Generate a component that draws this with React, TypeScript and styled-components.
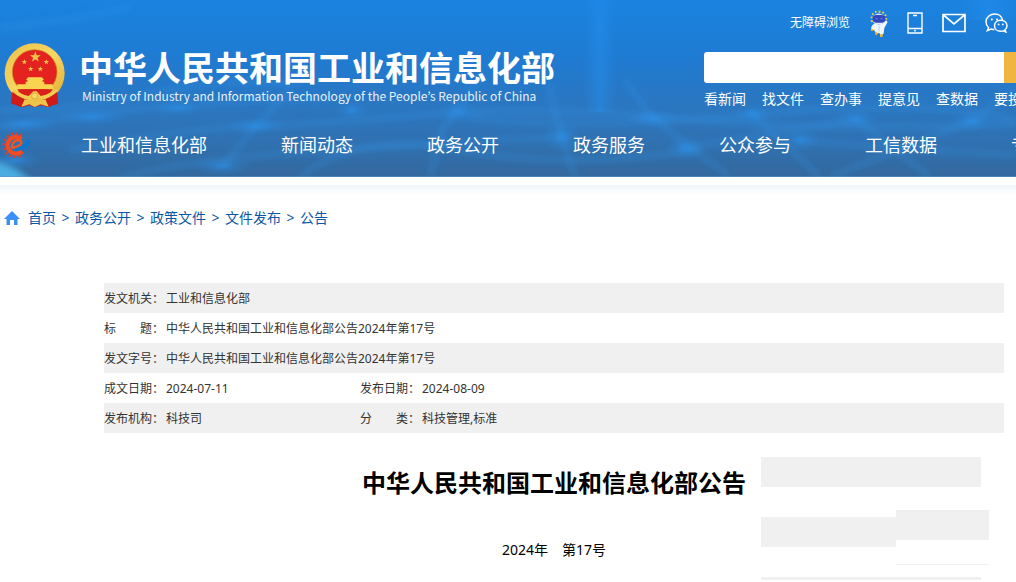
import React from "react";
import styled, { createGlobalStyle } from "styled-components";

const GlobalStyle = createGlobalStyle`
  * { box-sizing: border-box; }
  body {
    margin: 0;
    background: #fff;
    color: #333;
    font-family: "Noto Sans", "Noto Sans CJK SC", sans-serif;
    font-size: 14px;
    line-height: 20px;
  }
  a { color: inherit; text-decoration: none; }
`;

const Page = styled.div`
  min-width: 0;
  overflow: hidden;
`;

const Header = styled.header`
  position: relative;
  overflow: hidden;
  padding-bottom: 5px;
  color: #fff;
  background: linear-gradient(#1a83e0 0%, #1f7bd2 32%, #2c76bf 62%, #3070af 82%, #33689d 100%);
`;

const Backdrop = styled.svg`
  position: absolute;
  inset: 0;
  width: 100%;
  height: 100%;
`;

const Masthead = styled.div`
  position: relative;
  display: flex;
  justify-content: space-between;
  height: 118px;
`;

const Brand = styled.a`
  display: flex;
  align-items: flex-start;
  gap: 13px;
  padding: 42px 0 0 4px;
  white-space: nowrap;
`;

const BrandText = styled.div`
  display: flex;
  flex-direction: column;
  padding-top: 6px;
`;

const BrandName = styled.span`
  font-family: "Noto Sans CJK SC", sans-serif;
  font-size: 34px;
  font-weight: 700;
  line-height: 38px;
`;

const BrandEnglish = styled.span`
  padding-left: 3px;
  color: #e6f1fb;
  font-family: "Noto Sans CJK KR", sans-serif;
  font-size: 12px;
  line-height: 20px;
`;

const Tools = styled.div`
  flex: 0 0 312px;
  display: flex;
  flex-direction: column;
  overflow: hidden;
  white-space: nowrap;
`;

const Utilities = styled.div`
  display: flex;
  align-items: center;
  height: 52px;
  padding: 0 8px 6px 86px;
  font-size: 12px;
`;

const IconLinks = styled.div`
  display: flex;
  flex: 1;
  align-items: center;
  justify-content: space-between;
  padding-left: 20px;
  a { display: flex; }
`;

const Search = styled.form`
  display: flex;
  flex: 0 0 31px;
`;

const SearchInput = styled.input`
  flex: 0 0 300px;
  padding: 0 10px;
  border: 0;
  border-radius: 3px 0 0 3px;
  background: #fff;
  font: inherit;
`;

const SearchButton = styled.button`
  flex: 0 0 60px;
  border: 0;
  background: #f0b541;
`;

const QuickLinks = styled.nav`
  display: flex;
  gap: 16px;
  padding-top: 6px;
`;

const MainNav = styled.nav`
  position: relative;
  display: flex;
  align-items: center;
  gap: 74px;
  height: 54px;
  font-size: 18px;
  line-height: 26px;
  white-space: nowrap;
`;

const NavLead = styled.div`
  display: flex;
  flex: none;
  align-items: center;
  gap: 50px;
  padding-left: 1px;
`;

const HeaderShade = styled.div`
  height: 10px;
  margin-top: 8px;
  background: linear-gradient(#f0f5fa, #fff);
`;

const Breadcrumb = styled.nav`
  display: flex;
  align-items: center;
  padding: 13px 4px 55px;
  color: #0b57a4;
`;

const HomeIcon = styled.svg`
  margin-right: 8px;
`;

const Separator = styled.span`
  width: 19px;
  text-align: center;
`;

const Content = styled.main`
  padding: 0 12px 0 104px;
`;

const MetaTable = styled.table`
  width: 100%;
  border-collapse: collapse;
  table-layout: fixed;
  font-size: 12px;
  tr:nth-child(odd) { background: #f0f0f0; }
  th, td {
    height: 30px;
    padding: 2px 0 0;
    font-weight: 400;
    text-align: left;
    white-space: nowrap;
  }
`;

const LabelCol = styled.col`
  width: 62px;
`;

const ValueCol = styled.col`
  width: 194px;
`;

const Article = styled.article`
  position: relative;
  padding: 32px 0 20px;
  color: #000;
  text-align: center;
`;

const Title = styled.h1`
  margin: 0;
  font-size: 24px;
  font-weight: 700;
  line-height: 36px;
`;

const Issue = styled.p`
  margin: 39px 0 0;
`;

const Floating = styled.aside`
  position: absolute;
  top: 24px;
  right: 15px;
  width: 228px;
`;

const Stripes = styled.div`
  display: flex;
  flex-direction: column;
  gap: 30px;
  width: 220px;
`;

const Stripe = styled.div<{ $height: number }>`
  height: ${(p) => p.$height}px;
  background: #f0f0f0;
`;

const Overlay = styled.div`
  position: absolute;
  top: 53px;
  right: 0;
  width: 93px;
  padding-bottom: 24px;
  border-bottom: 1px solid #f0f0f0;
  background: #fff;
`;

const GLOWS = [
  [25, 124, 36, 9], [15, 160, 26, 10], [92, 117, 34, 9], [178, 108, 26, 8],
  [222, 166, 30, 10], [256, 126, 30, 9], [460, 112, 20, 12],
  [352, 110, 16, 10], [562, 137, 20, 16], [652, 118, 26, 9], [685, 148, 20, 14],
  [752, 114, 20, 10], [800, 140, 20, 12], [856, 119, 22, 10], [972, 121, 22, 10],
];

const STRANDS = [
  "M0 28 Q60 22 130 8", "M0 128 Q160 100 330 98", "M470 112 Q560 108 700 120 T1016 124",
  "M70 150 Q190 128 256 126 T460 112", "M0 110 Q70 112 150 94 T300 84",
  "M120 177 Q200 160 280 154 T470 142 562 137", "M222 166 256 126 290 90",
  "M430 177 L442 130 L485 72", "M575 177 L562 137 L548 84", "M470 118 Q600 130 760 114 T1016 120",
  "M625 80 L652 118 L730 177", "M685 148 Q760 135 856 119", "M752 114 L820 177",
  "M830 177 L972 121 L1016 88", "M856 119 L930 177", "M800 140 Q900 150 1016 155",
  "M300 177 Q360 130 460 150 T700 150",
];

function HeaderBackdrop() {
  return (
    <Backdrop viewBox="0 0 1016 177" preserveAspectRatio="none" aria-hidden="true">
      <defs>
        <filter id="soft" x="-50%" y="-50%" width="200%" height="200%">
          <feGaussianBlur stdDeviation="3" />
        </filter>
        <radialGradient id="glow">
          <stop offset="0" stopColor="#2b93ee" stopOpacity="0.6" />
          <stop offset="0.5" stopColor="#2b93ee" stopOpacity="0.2" />
          <stop offset="1" stopColor="#2b93ee" stopOpacity="0" />
        </radialGradient>
        <linearGradient id="beam">
          <stop offset="0" stopColor="#2590f0" stopOpacity="0" />
          <stop offset="0.5" stopColor="#2590f0" stopOpacity="0.45" />
          <stop offset="1" stopColor="#2590f0" stopOpacity="0" />
        </linearGradient>
      </defs>
      <rect x="584" width="32" height="112" fill="url(#beam)" />
      <rect x="962" width="54" height="20" fill="url(#beam)" />
      <g fill="none" stroke="#3398ee" strokeOpacity="0.36" strokeWidth="4" filter="url(#soft)">
        {STRANDS.map((d) => <path key={d} d={d} />)}
      </g>
      {GLOWS.map(([cx, cy, rx, ry]) => (
        <ellipse key={cx} cx={cx} cy={cy} rx={rx} ry={ry} fill="url(#glow)" />
      ))}
      <path d="M-8 160 Q18 166 34 184 H-8Z" fill="#50bdf2" opacity="0.8" filter="url(#soft)" />
      <rect y="176" width="1016" height="1" fill="#5c92c4" opacity="0.6" />
    </Backdrop>
  );
}

const STAR = "M0-10 2.4-3.2 9.5-3.1 3.8 1.2 5.9 8.1 0 4 -5.9 8.1 -3.8 1.2 -9.5-3.1 -2.4-3.2Z";

function Emblem() {
  return (
    <svg width="62" height="66" viewBox="12 16 186 198" aria-hidden="true">
      <defs>
        <linearGradient id="gold" x1="0" y1="0" x2="1" y2="1">
          <stop offset="0" stopColor="#eac04a" />
          <stop offset="0.5" stopColor="#f7d763" />
          <stop offset="1" stopColor="#e0a92c" />
        </linearGradient>
      </defs>
      <path d="M38 148 34 200 46 204 64 212 88 206 104 212 122 206 146 212 160 204 173 202 171 148Z" fill="#cb1d18" />
      <circle cx="104" cy="110" r="90" fill="url(#gold)" />
      <circle cx="104" cy="106" r="67" fill="#e42320" stroke="#c78a22" strokeWidth="2" />
      <g fill="#f0c549">
        <path d={STAR} transform="translate(106 61) scale(1.7)" />
        <path d={STAR} transform="translate(73 76) scale(.85)" />
        <path d={STAR} transform="translate(139 76) scale(.85)" />
        <path d={STAR} transform="translate(92 97) scale(.85)" />
        <path d={STAR} transform="translate(121 97) scale(.85)" />
      </g>
      <path d="M84 122H126L132 130H128V135H133V143H158V150L162 158H47L52 150V143H77V135H82V130H78Z" fill="#f8d451" />
      <path d="M52 158H158Q150 174 126 179Q104 184 82 179Q58 174 52 158Z" fill="#d9201c" />
      <path d="M40 156Q60 172 86 178L100 164H110L122 178Q150 172 170 156L172 166Q156 184 130 190L104 178 78 190Q50 184 37 166Z" fill="#f2cb4f" />
      <path d="M37 165Q60 184 84 190L70 210 46 204 34 200ZM172 165Q150 184 126 190L140 210 160 204 173 202Z" fill="#cf1c18" />
      <path d="M74 188 104 196 136 188 146 210 122 203 104 211 88 203 64 210Z" fill="#efc44a" />
      <circle cx="104" cy="178" r="9" fill="#f8da66" stroke="#d39a2a" strokeWidth="2" />
    </svg>
  );
}

function GearLogo() {
  return (
    <svg width="30" height="26" viewBox="3 285 90 78" aria-hidden="true">
      <g fill="none">
        <path d="M66 296A35 35 0 1 0 70 350" stroke="#d8412f" strokeWidth="7" strokeDasharray="7 7" />
        <path d="M64 306A25 25 0 1 0 66 342" stroke="#f04b22" strokeWidth="13" />
        <path d="M36 333Q34 316 50 310Q66 308 64 318Q60 329 36 333" stroke="#f0561f" strokeWidth="7" />
      </g>
      <path d="M44 334Q74 330 80 307L92 312Q86 340 50 342Z" fill="#0878ce" />
    </svg>
  );
}

function Robot() {
  return (
    <svg width="18" height="27" viewBox="0 0 54 81" aria-hidden="true">
      <g fill="none" stroke="#eed04d" strokeWidth="6" strokeDasharray="5 6">
        <path d="M6 36Q0 5 26 5Q52 5 48 36" />
      </g>
      <path d="M10 18Q26 3 43 18V38Q27 48 10 38Z" fill="#dfe9f8" />
      <rect x="8" y="15" width="38" height="23" rx="11" fill="#3346bd" />
      <path d="M16 26h7M31 26h7" stroke="#5a7cf0" strokeWidth="4" />
      <path d="M14 40Q27 47 41 39L48 31 53 36 43 54 41 70 34 78 28 69 18 70 12 60 4 60Q1 48 14 40Z" fill="#f2f5fa" />
      <path d="M3 57h6v6H3zM17 66l8 3-5 7-5-3zM30 73h9l-2 8h-7z" fill="#f1b72c" />
      <path d="M27 48v17" stroke="#bed0e5" strokeWidth="3" />
    </svg>
  );
}

function PhoneIcon() {
  return (
    <svg width="16" height="22" viewBox="0 0 16 22" fill="none" stroke="#fff" aria-hidden="true">
      <path d="M1 1H15V21H1Z" strokeWidth="1.4" />
      <path d="M1 16.5H15M6 3.5H10" strokeWidth="1.3" />
      <circle cx="8" cy="18.7" r=".9" fill="#fff" stroke="none" />
    </svg>
  );
}

function MailIcon() {
  return (
    <svg width="24" height="20" viewBox="0 0 24 20" fill="none" stroke="#fff" strokeWidth="1.7" aria-hidden="true">
      <path d="M1 1.5H23V18.5H1ZM1.5 2 12 11 22.5 2" />
    </svg>
  );
}

function WechatIcon() {
  return (
    <svg width="23" height="20" viewBox="0 0 23 20" fill="none" stroke="#fff" strokeWidth="1.5" aria-hidden="true">
      <path d="M17.5 7C16.5 3 13.4 1 9.8 1 5 1 1 4.4 1 8.8c0 2.4 1 4.5 2.6 5.9L2.4 17.6 6.2 16c1 .4 2 .6 3.2.6" />
      <path d="M15.7 7.2c3.6 0 6.3 2.4 6.3 5.5 0 1.8-.8 3.2-2.1 4.2l.9 2.1-2.7-1.1c-.8.3-1.6.4-2.4.4-3.6 0-6.2-2.4-6.2-5.6s2.6-5.5 6.2-5.5Z" />
      <g fill="#fff" stroke="none">
        <circle cx="6.8" cy="6.5" r="1" /><circle cx="12" cy="6.5" r="1" />
        <circle cx="13.6" cy="11.4" r=".9" /><circle cx="17.8" cy="11.4" r=".9" />
      </g>
    </svg>
  );
}

const QUICK = ["看新闻", "找文件", "查办事", "提意见", "查数据", "要投诉"];
const NAV = ["新闻动态", "政务公开", "政务服务", "公众参与", "工信数据", "专题专栏"];
const CRUMBS = ["首页", "政务公开", "政策文件", "文件发布", "公告"];

export default function App() {
  return (
    <Page>
      <GlobalStyle />
      <Header>
        <HeaderBackdrop />
        <Masthead>
          <Brand href="#">
            <Emblem />
            <BrandText>
              <BrandName>中华人民共和国工业和信息化部</BrandName>
              <BrandEnglish lang="en">
                Ministry of Industry and Information Technology of the People’s Republic of China
              </BrandEnglish>
            </BrandText>
          </Brand>
          <Tools>
            <Utilities>
              <a href="#">无障碍浏览</a>
              <IconLinks>
                <a href="#" aria-label="智能问答"><Robot /></a>
                <a href="#" aria-label="手机版"><PhoneIcon /></a>
                <a href="#" aria-label="邮箱"><MailIcon /></a>
                <a href="#" aria-label="微信"><WechatIcon /></a>
              </IconLinks>
            </Utilities>
            <Search role="search">
              <SearchInput type="text" aria-label="搜索" />
              <SearchButton type="button" aria-label="搜索" />
            </Search>
            <QuickLinks>
              {QUICK.map((t) => <a key={t} href="#">{t}</a>)}
            </QuickLinks>
          </Tools>
        </Masthead>
        <MainNav>
          <NavLead>
            <GearLogo />
            <a href="#">工业和信息化部</a>
          </NavLead>
          {NAV.map((t) => <a key={t} href="#">{t}</a>)}
        </MainNav>
      </Header>
      <HeaderShade />
      <Breadcrumb>
        <HomeIcon width="16" height="14" viewBox="0 0 16 14" aria-hidden="true">
          <path d="M8 0 16 8H13.5V14H10V9H6V14H2.5V8H0Z" fill="#3b8ff5" />
        </HomeIcon>
        {CRUMBS.map((t, i) => (
          <React.Fragment key={t}>
            {i > 0 && <Separator>&gt;</Separator>}
            <a href="#">{t}</a>
          </React.Fragment>
        ))}
      </Breadcrumb>
      <Content>
        <MetaTable>
          <colgroup>
            <LabelCol /><ValueCol /><LabelCol /><col />
          </colgroup>
          <tbody>
            <tr><th scope="row">发文机关：</th><td colSpan={3}>工业和信息化部</td></tr>
            <tr><th scope="row">标　　题：</th><td colSpan={3}>中华人民共和国工业和信息化部公告2024年第17号</td></tr>
            <tr><th scope="row">发文字号：</th><td colSpan={3}>中华人民共和国工业和信息化部公告2024年第17号</td></tr>
            <tr>
              <th scope="row">成文日期：</th><td>2024-07-11</td>
              <th scope="row">发布日期：</th><td>2024-08-09</td>
            </tr>
            <tr>
              <th scope="row">发布机构：</th><td>科技司</td>
              <th scope="row">分　　类：</th><td>科技管理,标准</td>
            </tr>
          </tbody>
        </MetaTable>
        <Article>
          <Title>中华人民共和国工业和信息化部公告</Title>
          <Issue>2024年　第17号</Issue>
          <Floating>
            <Stripes>
              <Stripe $height={30} />
              <Stripe $height={30} />
              <Stripe $height={3} />
            </Stripes>
            <Overlay>
              <Stripe $height={30} />
            </Overlay>
          </Floating>
        </Article>
      </Content>
    </Page>
  );
}
